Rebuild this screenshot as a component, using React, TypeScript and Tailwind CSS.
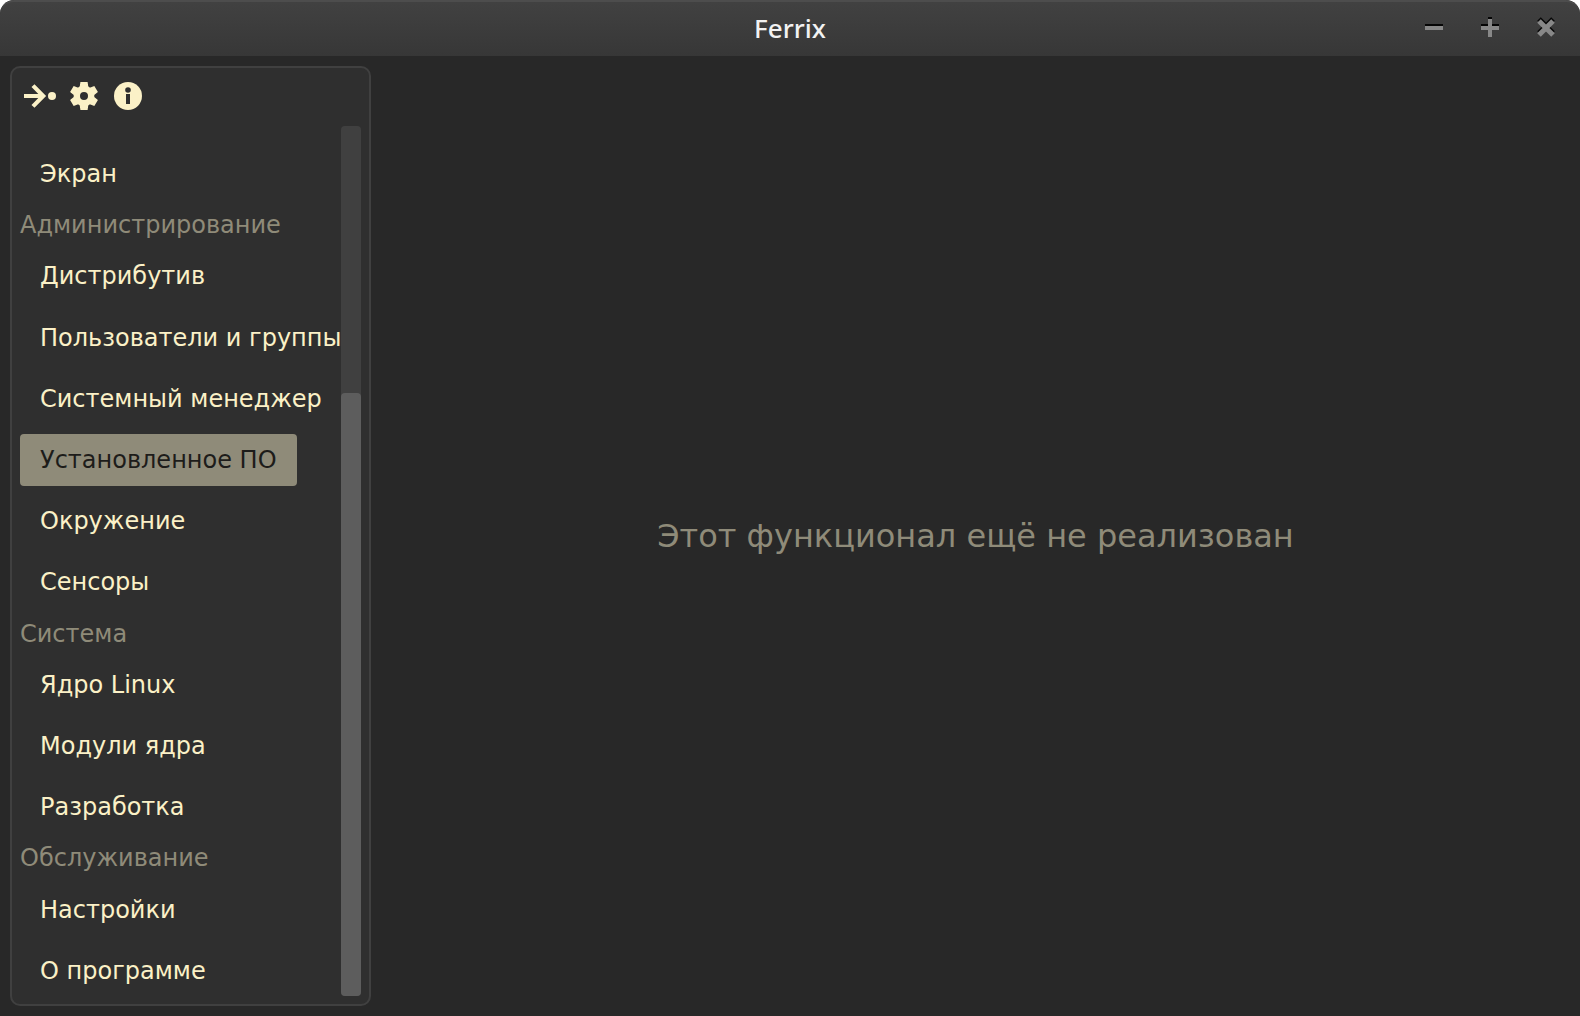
const rows = [
  { text: 'Экран' },
  { text: 'Администрирование', header: true },
  { text: 'Дистрибутив' },
  { text: 'Пользователи и группы' },
  { text: 'Системный менеджер' },
  { text: 'Установленное ПО', selected: true },
  { text: 'Окружение' },
  { text: 'Сенсоры' },
  { text: 'Система', header: true },
  { text: 'Ядро Linux' },
  { text: 'Модули ядра' },
  { text: 'Разработка' },
  { text: 'Обслуживание', header: true },
  { text: 'Настройки' },
  { text: 'О программе' },
];

function TitleBar() {
  return (
    <header className="grid h-14 shrink-0 grid-cols-[1fr_auto_1fr] items-center rounded-t-[14px] border-t-2 border-[#4d4d4d] bg-linear-to-b from-[#414141] to-[#373737]">
      <span />
      <h1 className="pb-0.5 font-['Noto_Sans'] text-[26px] leading-none font-medium text-[#f2f2f2]">Ferrix</h1>
      <div className="flex h-full items-start justify-end gap-[38px] pt-[14px] pr-[25px]">
        <button aria-label="Свернуть">
          <svg width="18" height="22" viewBox="0 0 18 22">
            <path d="M0 8h18v2H0z" fill="#060606" />
            <path d="M0 10h18v4H0z" fill="#888" />
          </svg>
        </button>
        <button aria-label="Развернуть">
          <svg width="18" height="22" viewBox="0 0 18 22">
            <path d="M7 1h4v7h7v4H0V8h7z" fill="#060606" />
            <path d="M7 3h4v7h7v4h-7v7H7v-7H0v-4h7z" fill="#888" />
          </svg>
        </button>
        <button aria-label="Закрыть">
          <svg width="18" height="22" viewBox="0 0 18 22">
            <path d="M2 3l14 14M16 3L2 17" stroke="#060606" strokeWidth="5" />
            <path d="M2 5l14 14M16 5L2 19" stroke="#888" strokeWidth="5" />
          </svg>
        </button>
      </div>
    </header>
  );
}

function Toolbar() {
  return (
    <div className="flex h-7 shrink-0 items-center pl-3 text-[#fbf1c7]">
      <svg width="32" height="28" viewBox="0 0 32 28" fill="none" stroke="currentColor" strokeWidth="4.2">
        <path d="M0 14h18M9 3.6L19.2 14 9 24.4" />
        <circle cx="28" cy="14" r="4" fill="currentColor" stroke="none" />
      </svg>
      <svg className="ml-[14px]" width="28" height="28" viewBox="-14 -14 28 28" fill="currentColor">
        <path d="M-3.6-14H3.6L4.6-7H-4.6zM-3.6 14H3.6L4.6 7H-4.6z" />
        <path d="M-3.6-14H3.6L4.6-7H-4.6zM-3.6 14H3.6L4.6 7H-4.6z" transform="rotate(60)" />
        <path d="M-3.6-14H3.6L4.6-7H-4.6zM-3.6 14H3.6L4.6 7H-4.6z" transform="rotate(120)" />
        <circle r="7.2" fill="none" stroke="currentColor" strokeWidth="6.4" />
      </svg>
      <svg className="ml-4" width="28" height="28" viewBox="0 0 28 28">
        <circle cx="14" cy="14" r="14" fill="currentColor" />
        <circle cx="14" cy="8" r="2.8" fill="#2f2f2f" />
        <path d="M12 12h4v10h-4z" fill="#2f2f2f" />
      </svg>
    </div>
  );
}

function Sidebar() {
  return (
    <aside className="flex w-[361px] shrink-0 flex-col rounded-[10px] border-2 border-[#404040] bg-[#2f2f2f] pt-[14px] pr-2 pb-2">
      <Toolbar />
      <div className="mt-4 flex min-h-0 flex-1">
        <nav className="-mb-[0.35px] flex w-[329px] flex-col items-start justify-end gap-[10px] overflow-hidden pl-2 text-2xl leading-[31.2px] whitespace-nowrap">
          {rows.map((row) =>
            row.header ? (
              <h2 key={row.text} className="-mb-[0.55px] pt-[0.55px] text-[#8f8b79]">{row.text}</h2>
            ) : (
              <button
                key={row.text}
                className={
                  row.selected
                    ? 'rounded bg-[#8f8b79] px-5 pt-[10.55px] pb-[9.45px] text-[#1d1c1a]'
                    : 'px-5 pt-[10.55px] pb-[9.45px] text-[#fbf1c7]'
                }
              >
                {row.text}
              </button>
            ),
          )}
        </nav>
        <div className="flex w-5 shrink-0 flex-col justify-end rounded bg-[#404040]">
          <div className="h-[603px] rounded bg-[#5d5d5d]" />
        </div>
      </div>
    </aside>
  );
}

export default function App() {
  return (
    <div className="h-[1016px] w-[1580px] bg-white font-['DejaVu_Sans',sans-serif]">
      <div className="flex h-full flex-col overflow-hidden rounded-t-[14px] bg-[#282828]">
        <TitleBar />
        <div className="flex min-h-0 flex-1 p-[10px]">
          <Sidebar />
          <main className="ml-[10px] flex flex-1 items-center justify-center text-[32px] text-[#8f8b79]">
            Этот функционал ещё не реализован
          </main>
        </div>
      </div>
    </div>
  );
}
